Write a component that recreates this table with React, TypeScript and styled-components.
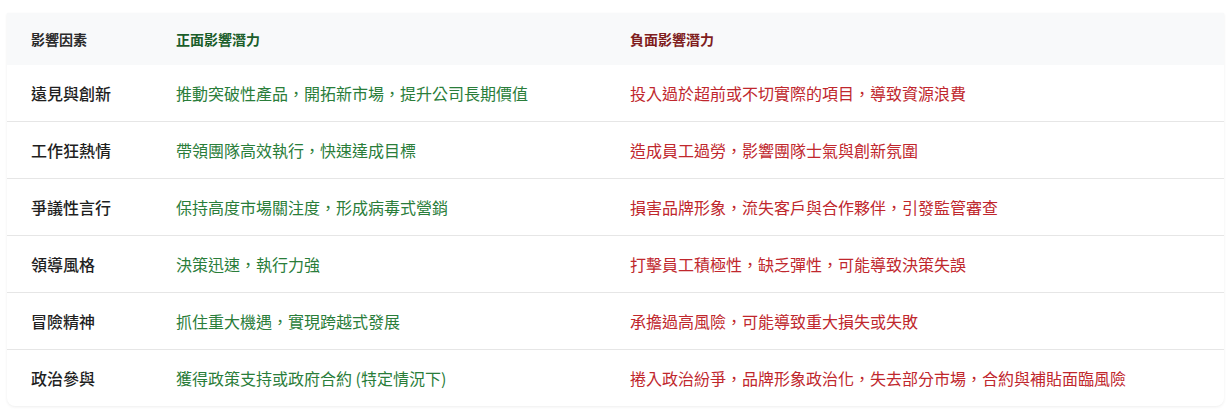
import styled, { createGlobalStyle } from 'styled-components';

const Global = createGlobalStyle`
  body {
    margin: 0;
    background: #fff;
    font-family: "Noto Sans CJK TC", "Noto Sans", sans-serif;
  }
`;

const Page = styled.div`
  padding: 13px 8px 8px 7px;
`;

const Card = styled.div`
  border-radius: 0 0 8px 8px;
  overflow: hidden;
  background: #fff;
  box-shadow: 0 1px 3px rgba(0, 0, 0, 0.07);
`;

const Table = styled.table`
  width: 100%;
  border-collapse: collapse;
  table-layout: fixed;
`;

type Tone = 'factor' | 'good' | 'bad';

const headColor = { factor: '#2b2b2b', good: '#1b5e2a', bad: '#7f1d1d' };
const bodyColor = { factor: '#1f1f1f', good: '#2a7d3a', bad: '#c0272d' };

const Head = styled.thead`
  background: #f8f9fa;
`;

const Th = styled.th<{ $tone: Tone }>`
  height: 52px;
  padding: 0 24px;
  text-align: left;
  font-size: 14px;
  font-weight: 700;
  color: ${({ $tone }) => headColor[$tone]};
`;

const Row = styled.tr`
  border-bottom: 1px solid #e6e6e6;
  &:last-child {
    border-bottom: none;
  }
`;

const Td = styled.td<{ $tone: Tone }>`
  height: 56px;
  padding: 0 24px;
  font-size: 16px;
  font-weight: ${({ $tone }) => ($tone === 'factor' ? 500 : 400)};
  color: ${({ $tone }) => bodyColor[$tone]};
  white-space: nowrap;
`;

const rows = [
  ['遠見與創新', '推動突破性產品，開拓新市場，提升公司長期價值', '投入過於超前或不切實際的項目，導致資源浪費'],
  ['工作狂熱情', '帶領團隊高效執行，快速達成目標', '造成員工過勞，影響團隊士氣與創新氛圍'],
  ['爭議性言行', '保持高度市場關注度，形成病毒式營銷', '損害品牌形象，流失客戶與合作夥伴，引發監管審查'],
  ['領導風格', '決策迅速，執行力強', '打擊員工積極性，缺乏彈性，可能導致決策失誤'],
  ['冒險精神', '抓住重大機遇，實現跨越式發展', '承擔過高風險，可能導致重大損失或失敗'],
  ['政治參與', '獲得政策支持或政府合約 (特定情況下)', '捲入政治紛爭，品牌形象政治化，失去部分市場，合約與補貼面臨風險'],
];

export default function App() {
  return (
    <>
      <Global />
      <Page>
        <Card>
          <Table>
            <colgroup>
              <col style={{ width: 145 }} />
              <col style={{ width: 454 }} />
              <col />
            </colgroup>
            <Head>
              <tr>
                <Th $tone="factor">影響因素</Th>
                <Th $tone="good">正面影響潛力</Th>
                <Th $tone="bad">負面影響潛力</Th>
              </tr>
            </Head>
            <tbody>
              {rows.map(([factor, good, bad]) => (
                <Row key={factor}>
                  <Td $tone="factor">{factor}</Td>
                  <Td $tone="good">{good}</Td>
                  <Td $tone="bad">{bad}</Td>
                </Row>
              ))}
            </tbody>
          </Table>
        </Card>
      </Page>
    </>
  );
}
